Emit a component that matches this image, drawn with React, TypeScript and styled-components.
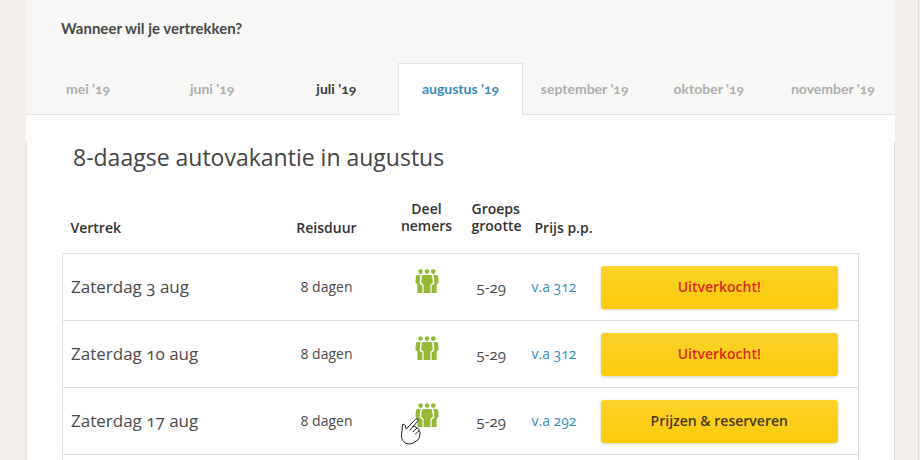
import React from "react";
import styled, { createGlobalStyle } from "styled-components";

const Global = createGlobalStyle`
  * { box-sizing: border-box; }
  body {
    margin: 0;
    background: #f2efec;
    color: #444;
    font-family: "Open Sans", "Noto Sans", sans-serif;
    font-variant-numeric: oldstyle-nums;
  }
  button { font: inherit; font-variant-numeric: inherit; cursor: pointer; }
`;

const Page = styled.main`
  height: 100vh;
  overflow: hidden;
  display: flex;
  padding: 0 23px 0 26px;
  margin-right: 1px;
  border-right: 1px solid #dcdcdc;
`;

const Panel = styled.div`
  flex: 1;
  display: flex;
  flex-direction: column;
  background: #fff;
`;

const Picker = styled.section`
  background: #f7f7f5;
  padding-top: 18px;
`;

const Question = styled.h2`
  margin: 0 0 25px;
  padding-left: 35px;
  font: 700 15px/20px Lato, sans-serif;
  color: #4a4a4a;
`;

const Tabs = styled.div`
  display: flex;
  box-shadow: inset 0 -1px #e4e4e4;
`;

type TabState = "muted" | "available" | "active";
const tabColor = { muted: "#adadad", available: "#3c3c3c", active: "#3a8bbd" };

const Tab = styled.button<{ $state: TabState }>`
  flex: 1;
  height: 52px;
  padding: 0 0 2px;
  font-family: Lato, sans-serif;
  font-size: 14px;
  font-weight: 700;
  line-height: 20px;
  white-space: nowrap;
  color: ${(p) => tabColor[p.$state]};
  background: ${(p) => (p.$state === "active" ? "#fff" : "transparent")};
  border: 1px solid ${(p) => (p.$state === "active" ? "#e4e4e4" : "transparent")};
  border-bottom: 0;
`;

const Body = styled.section`
  flex: 1;
  margin-top: 27px;
  padding: 0 35px;
  border: 1px solid #e4e2e0;
  border-width: 0 1px;
`;

const Title = styled.h1`
  margin: 0 0 27px;
  padding-left: 11px;
  font-size: 23px;
  line-height: 31px;
  font-weight: 400;
  font-variant-numeric: lining-nums;
  color: #444;
`;

const Table = styled.table`
  width: 100%;
  table-layout: fixed;
  border-collapse: collapse;
  tbody { border: 1px solid #dfdfdf; }
`;

const Col = styled.col<{ $width?: number }>`
  width: ${(p) => (p.$width ? `${p.$width}px` : "auto")};
`;

const Head = styled.th<{ $center?: boolean; $indent?: number; $double?: boolean }>`
  height: 53px;
  padding: 0 0 ${(p) => (p.$double ? 19 : 17)}px ${(p) => p.$indent ?? 0}px;
  vertical-align: bottom;
  text-align: ${(p) => (p.$center ? "center" : "left")};
  font-size: 14px;
  line-height: 17px;
  font-weight: 600;
  white-space: nowrap;
  color: #333;
`;

const Row = styled.tr`
  height: 67px;
  border-bottom: 1px solid #dfdfdf;
`;

const Cell = styled.td<{ $center?: boolean; $indent?: number; $size?: number }>`
  padding: 0 0 0 ${(p) => p.$indent ?? 0}px;
  text-align: ${(p) => (p.$center ? "center" : "left")};
  font-size: ${(p) => p.$size ?? 14}px;
  line-height: 20px;
  white-space: nowrap;
  color: #4a4a4a;
`;

const BookCell = styled(Cell)`
  padding: 0 20px 0 0;
`;

const Lining = styled.span`
  font-variant-numeric: lining-nums;
`;

const Price = styled.a`
  color: #3a8bbd;
  text-decoration: none;
`;

const Book = styled.button<{ $soldOut: boolean }>`
  display: block;
  width: 100%;
  height: 43px;
  border: 0;
  border-radius: 3px;
  background: linear-gradient(#fdd22a, #fbcb0a);
  box-shadow: 0 1px 3px rgba(120, 90, 0, 0.3);
  font-size: 14px;
  font-weight: 600;
  color: ${(p) => (p.$soldOut ? "#dc2a1c" : "#4a3c14")};
`;

const Group = styled.div`
  position: relative;
  width: 24px;
  margin: 0 auto;
  padding-bottom: 12px;
  svg { display: block; }
`;

const Pointer = styled.svg`
  position: absolute;
  left: -15px;
  top: 14px;
`;

const People = () => (
  <svg width="24" height="24" viewBox="0 0 24 24" fill="#93b935" aria-label="deelnemers">
    <circle cx="5.6" cy="2.6" r="2.3" />
    <circle cx="12" cy="2.6" r="2.3" />
    <circle cx="18.4" cy="2.6" r="2.3" />
    <path d="M2.6 6h3.4Q5 7.400 5 9L4.600 14.500 7.400 16.800V24H2.400v-8.600L.4 13.800.9 7.600Q1.200 6 2.600 6Z" />
    <path d="M21.400 6h-3.400Q19 7.400 19 9l.4 5.500-2.800 2.300V24h5v-8.600l2-1.600-.5-6.200Q22.800 6 21.400 6Z" />
    <path d="M8.600 6h6.800q1.600 0 1.800 1.600l.6 6.200-2.400 2V24H8.600v-8.200l-2.400-2 .6-6.200Q7 6 8.600 6Z" />
  </svg>
);

const Hand = () => (
  <Pointer width="22" height="28" viewBox="0 0 22 28" aria-hidden="true">
    <path
      d="M2.500 7.500Q4.300 6.500 5 8.300L6.300 12 15.400 2.300Q17 .9 18 2.200 18.600 3.200 17.400 4.600L12.600 10Q15 8.500 16.300 10.200L16.500 11.400Q18.400 10.800 18.900 12.500L18.800 14Q20.400 14 20 15.800L19.400 20.500Q18.500 23 16 24.200 13 26.800 9.500 27 4.500 27 2.700 23.500 1 21 1.500 17.500L2 14Z"
      fill="#fff"
      stroke="#222"
      strokeWidth="1"
      strokeLinejoin="round"
    />
    <path d="M12.600 10l-2.600 3M16.500 11.400l-3.300 3.300M18.800 14l-3.400 2.900" fill="none" stroke="#222" strokeLinecap="round" />
  </Pointer>
);

const months: { label: string; state: TabState }[] = [
  { label: "mei '19", state: "muted" },
  { label: "juni '19", state: "muted" },
  { label: "juli '19", state: "available" },
  { label: "augustus '19", state: "active" },
  { label: "september '19", state: "muted" },
  { label: "oktober '19", state: "muted" },
  { label: "november '19", state: "muted" },
];

const trips = [
  { date: "Zaterdag 3 aug", price: "v.a 312", soldOut: true },
  { date: "Zaterdag 10 aug", price: "v.a 312", soldOut: true },
  { date: "Zaterdag 17 aug", price: "v.a 292", soldOut: false, hovered: true },
];

export default function App() {
  return (
    <>
      <Global />
      <Page>
        <Panel>
          <Picker>
            <Question>Wanneer wil je vertrekken?</Question>
            <Tabs role="tablist">
              {months.map((m) => (
                <Tab key={m.label} type="button" role="tab" aria-selected={m.state === "active"} $state={m.state}>
                  {m.label}
                </Tab>
              ))}
            </Tabs>
          </Picker>
          <Body>
            <Title>8-daagse autovakantie in augustus</Title>
            <Table>
              <colgroup>
                <Col />
                <Col $width={120} />
                <Col $width={80} />
                <Col $width={65} />
                <Col $width={69} />
                <Col $width={258} />
              </colgroup>
              <thead>
                <tr>
                  <Head scope="col" $indent={8}>Vertrek</Head>
                  <Head scope="col" $center>Reisduur</Head>
                  <Head scope="col" $center $double>Deel<br />nemers</Head>
                  <Head scope="col" $indent={5} $double>Groeps<br />grootte</Head>
                  <Head scope="col" $indent={3}>Prijs p.p.</Head>
                  <Head as="td" />
                </tr>
              </thead>
              <tbody>
                {trips.map((t) => (
                  <Row key={t.date}>
                    <Cell $indent={8} $size={17}>{t.date}</Cell>
                    <Cell $center><Lining>8 dagen</Lining></Cell>
                    <Cell $center>
                      <Group>
                        <People />
                        {t.hovered && <Hand />}
                      </Group>
                    </Cell>
                    <Cell $indent={10} $size={15}>5-29</Cell>
                    <Cell><Price href="#prijzen">{t.price}</Price></Cell>
                    <BookCell>
                      <Book type="button" $soldOut={t.soldOut}>
                        {t.soldOut ? "Uitverkocht!" : "Prijzen & reserveren"}
                      </Book>
                    </BookCell>
                  </Row>
                ))}
                <Row><Cell colSpan={6} /></Row>
              </tbody>
            </Table>
          </Body>
        </Panel>
      </Page>
    </>
  );
}
